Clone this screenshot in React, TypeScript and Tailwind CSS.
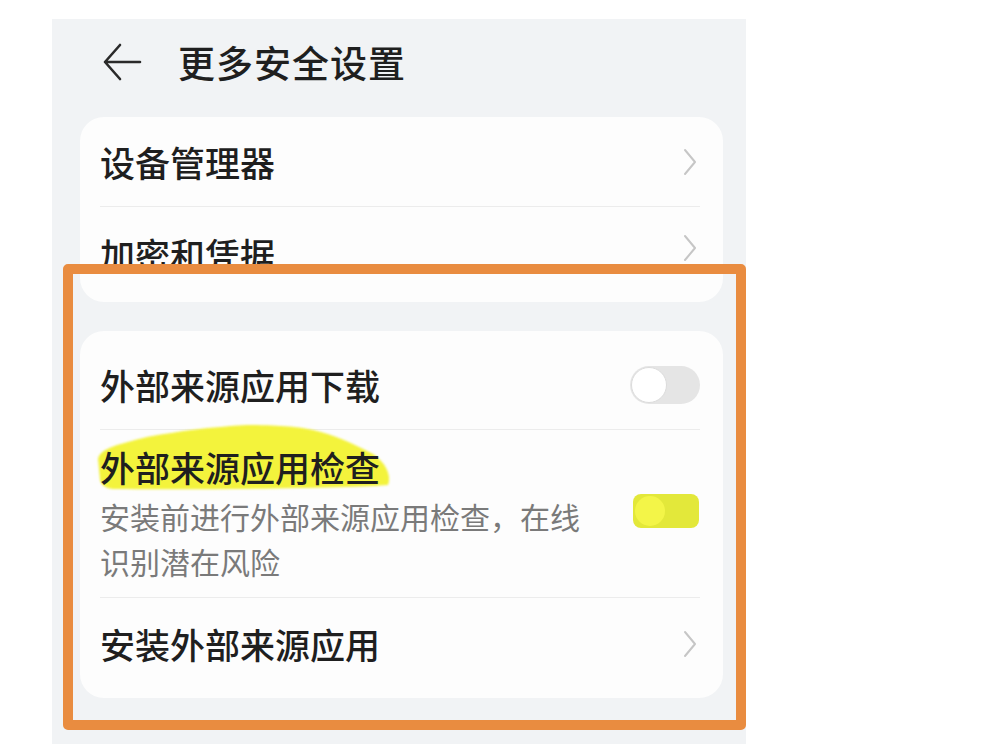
import React from "react";

function Chevron() {
  return (
    <svg width="14" height="28" viewBox="0 0 14 28" className="mr-[3px] shrink-0">
      <path d="M2 2 L12 14 L2 26" fill="none" stroke="#c6c6c6" strokeWidth="2" strokeLinecap="round" strokeLinejoin="round" />
    </svg>
  );
}

export default function App() {
  return (
    <div className="relative w-[998px] h-[744px] overflow-hidden bg-white font-['Noto_Sans_CJK_SC','Noto_Sans',sans-serif] text-[#1f1f1f]">
      <div className="ml-[52px] mt-[19px] w-[694px] h-[725px] bg-[#f1f3f5] flex flex-col">
        <header className="h-[86px] flex items-center pl-[50px] shrink-0">
          <svg width="40" height="40" viewBox="0 0 40 40" className="shrink-0">
            <path d="M38 20 H3 M18 3 L3 20 L18 37" fill="none" stroke="#2a2a2a" strokeWidth="2.6" strokeLinecap="round" strokeLinejoin="round" />
          </svg>
          <span className="ml-[36px] text-[37px] leading-none font-medium tracking-[1px]">更多安全设置</span>
        </header>

        <div className="mt-[12px] ml-[28px] w-[643px] bg-[#fdfdfd] rounded-[24px] pl-[20px] pr-[23px] shrink-0">
          <div className="h-[90px] flex items-center justify-between border-b border-[#ececec]">
            <span className="text-[35px] leading-[40px] font-medium">设备管理器</span>
            <Chevron />
          </div>
          <div className="h-[60px] overflow-hidden flex items-start justify-between pt-[27px]">
            <span className="text-[35px] leading-[40px] font-medium">加密和凭据</span>
            <Chevron />
          </div>
          <div className="h-[35px]" />
        </div>

        <div className="mt-[29px] ml-[28px] w-[643px] bg-[#fdfdfd] rounded-[24px] pl-[20px] pr-[23px] pt-[10px] pb-[8px] shrink-0">
          <div className="h-[89px] flex items-center justify-between border-b border-[#ececec]">
            <span className="text-[35px] leading-[40px] font-medium">外部来源应用下载</span>
            <div className="w-[70px] h-[38px] rounded-full bg-[#e5e5e5] flex items-center p-[1px] shrink-0">
              <div className="w-[36px] h-[36px] rounded-full bg-white border border-[#dcdcdc]" />
            </div>
          </div>

          <div className="relative flex items-center justify-between border-b border-[#ececec] pt-[15px] pb-[13px]">
            <svg width="300" height="72" viewBox="0 0 300 72" className="absolute left-[-4px] top-[-9px] blur-[1px]">
              <path
                d="M4 59 L2 38 C4 28 19 24 51 16 C84 10 114 6 151 4 C184 4 204 6 217 9 C239 14 254 21 277 33 C289 41 296 54 292 64 C264 67 104 69 17 68 C9 67 5 64 4 59 Z"
                fill="#f3f33c"
              />
            </svg>
            <div className="relative flex flex-col">
              <span className="text-[35px] leading-[44px] font-medium">外部来源应用检查</span>
              <span className="mt-[5px] w-[490px] text-[30px] leading-[45px] text-[#7a7a7a]">
                安装前进行外部来源应用检查，在线识别潜在风险
              </span>
            </div>
            <div className="mt-[-8px] w-[66px] h-[34px] rounded-[8px] bg-[#e3e83a] flex items-center p-[2px] shrink-0 mr-[1px]">
              <div className="w-[30px] h-[30px] rounded-full bg-[#f3f548]" />
            </div>
          </div>

          <div className="h-[92px] flex items-center justify-between">
            <span className="text-[35px] leading-[40px] font-medium">安装外部来源应用</span>
            <Chevron />
          </div>
        </div>
      </div>

      <div className="absolute left-[63px] top-[264px] w-[683px] h-[466px] border-[10px] border-[#e98c40] rounded-[5px]" />
    </div>
  );
}
